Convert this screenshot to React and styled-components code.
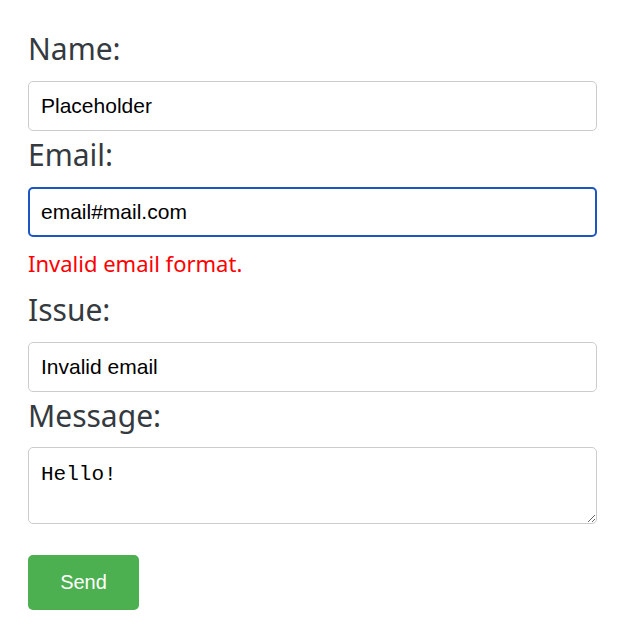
import React, { useState } from 'react';
import styled, { createGlobalStyle } from 'styled-components';

const GlobalStyle = createGlobalStyle`
    body {
        margin: 0;
        background: #ffffff;
        font-family: 'Noto Sans', sans-serif;
    }
`;

const Form = styled.form`
    display: flex;
    flex-direction: column;
    padding: 28px 28px 0 28px;
`;

const Label = styled.label`
    display: block;
    font-family: 'Noto Sans', sans-serif;
    font-size: 30px;
    line-height: 42px;
    color: #343a40;
    margin-top: ${(props) => props.$top || 0}px;
    margin-bottom: 11px;
`;

const Input = styled.input`
    box-sizing: border-box;
    width: 100%;
    height: 50px;
    padding: 0 12px;
    font-family: 'Liberation Sans', Arial, sans-serif;
    font-size: 21px;
    color: #000;
    background: #fff;
    border: ${(props) => (props.$invalid ? '2px solid #1b56c2' : '1px solid #ccc')};
    padding-left: ${(props) => (props.$invalid ? 11 : 12)}px;
    border-radius: 5px;
    outline: none;
`;

const ErrorText = styled.div`
    font-family: 'Noto Sans', sans-serif;
    font-size: 22px;
    line-height: 30px;
    color: #f00;
    margin-top: 11px;
    margin-bottom: 11px;
`;

const TextArea = styled.textarea`
    display: block;
    box-sizing: border-box;
    width: 100%;
    height: 77px;
    margin-top: -1px;
    padding: 15px 12px 12px;
    font-family: 'Liberation Mono', 'Courier New', monospace;
    font-size: 21px;
    color: #000;
    border: 1px solid #ccc;
    border-radius: 5px;
    outline: none;
`;

const Button = styled.button`
    align-self: flex-start;
    margin-top: 31px;
    width: 111px;
    height: 55px;
    background: #4caf50;
    color: #fff;
    border: none;
    border-radius: 5px;
    font-family: 'Liberation Sans', Arial, sans-serif;
    font-size: 20px;
    cursor: pointer;
`;

export default function App() {
    const [name, setName] = useState('Placeholder');
    const [email, setEmail] = useState('email#mail.com');
    const [issue, setIssue] = useState('Invalid email');
    const [message, setMessage] = useState('Hello!');

    return (
        <>
            <GlobalStyle />
            <Form onSubmit={(e) => e.preventDefault()}>
                <Label>Name:</Label>
                <Input value={name} onChange={(e) => setName(e.target.value)} />
                <Label $top={3}>Email:</Label>
                <Input
                    $invalid
                    value={email}
                    onChange={(e) => setEmail(e.target.value)}
                />
                <ErrorText>Invalid email format.</ErrorText>
                <Label>Issue:</Label>
                <Input value={issue} onChange={(e) => setIssue(e.target.value)} />
                <Label $top={3}>Message:</Label>
                <TextArea
                    value={message}
                    onChange={(e) => setMessage(e.target.value)}
                />
                <Button type="submit">Send</Button>
            </Form>
        </>
    );
}
